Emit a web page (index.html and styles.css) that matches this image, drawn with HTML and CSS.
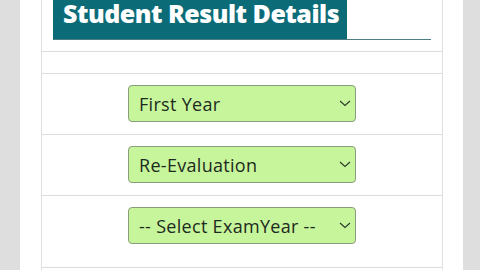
FILE: index.html
```html
<!DOCTYPE html>
<html>
<head>
<meta charset="utf-8">
<link rel="stylesheet" href="styles.css">
</head>
<body>
<div class="page">
  <div class="card">
    <div class="head">
      <h1 class="title">Student Result Details</h1>
    </div>
    <div class="row empty"></div>
    <div class="row">
      <div class="sel">
        <select><option>First Year</option></select>
        <svg class="chev" width="12" height="7" viewBox="0 0 12 7"><path d="M1 1 L6 5.5 L11 1" fill="none" stroke="#2a3a2a" stroke-width="1.1"/></svg>
      </div>
    </div>
    <div class="row">
      <div class="sel">
        <select><option>Re-Evaluation</option></select>
        <svg class="chev" width="12" height="7" viewBox="0 0 12 7"><path d="M1 1 L6 5.5 L11 1" fill="none" stroke="#2a3a2a" stroke-width="1.1"/></svg>
      </div>
    </div>
    <div class="row">
      <div class="sel">
        <select><option>-- Select ExamYear --</option></select>
        <svg class="chev" width="12" height="7" viewBox="0 0 12 7"><path d="M1 1 L6 5.5 L11 1" fill="none" stroke="#2a3a2a" stroke-width="1.1"/></svg>
      </div>
    </div>
    <div class="row empty"></div>
  </div>
</div>
</body>
</html>
```
FILE: styles.css
```css
html, body {
  margin: 0;
  padding: 0;
  background: #dedede;
  height: 270px;
  overflow: hidden;
}
.page {
  margin-left: 20px;
  width: 443px;
  height: 270px;
  background: #ffffff;
  padding-left: 21px;
  box-sizing: border-box;
  overflow: hidden;
}
.card {
  width: 402px;
  height: 270px;
  border-left: 1px solid #e0e0e0;
  border-right: 1px solid #e0e0e0;
  box-sizing: border-box;
  overflow: hidden;
}
.head {
  margin: 0 11px;
  height: 40px;
  border-bottom: 1px solid #4d7f82;
  box-sizing: border-box;
}
.title {
  display: inline-block;
  margin: 0;
  height: 39px;
  width: 294px;
  box-sizing: border-box;
  background: #0b6c78;
  color: #ffffff;
  font-family: "Open Sans", sans-serif;
  font-weight: 800;
  font-size: 25px;
  line-height: 27px;
  padding: 0 0 0 10px;
  letter-spacing: -0.5px;
  white-space: nowrap;
}
.row {
  border-top: 1px solid #dcdcdc;
  height: 60px;
  display: flex;
  align-items: center;
  justify-content: center;
}
.row.empty {
  height: 21px;
  margin-top: 11px;
}
.sel {
  position: relative;
  width: 228px;
  height: 37px;
  margin-top: -1px;
}
.sel select {
  appearance: none;
  -webkit-appearance: none;
  width: 100%;
  height: 100%;
  margin: 0;
  background: #c7f59c;
  border: 1px solid #8a9c7c;
  border-radius: 4px;
  font-family: "Open Sans", sans-serif;
  font-size: 18px;
  letter-spacing: 0.3px;
  color: #1d2a1d;
  padding: 0 0 0 10px;
  outline: none;
}
.chev {
  position: absolute;
  right: 5px;
  top: 15px;
}
```
